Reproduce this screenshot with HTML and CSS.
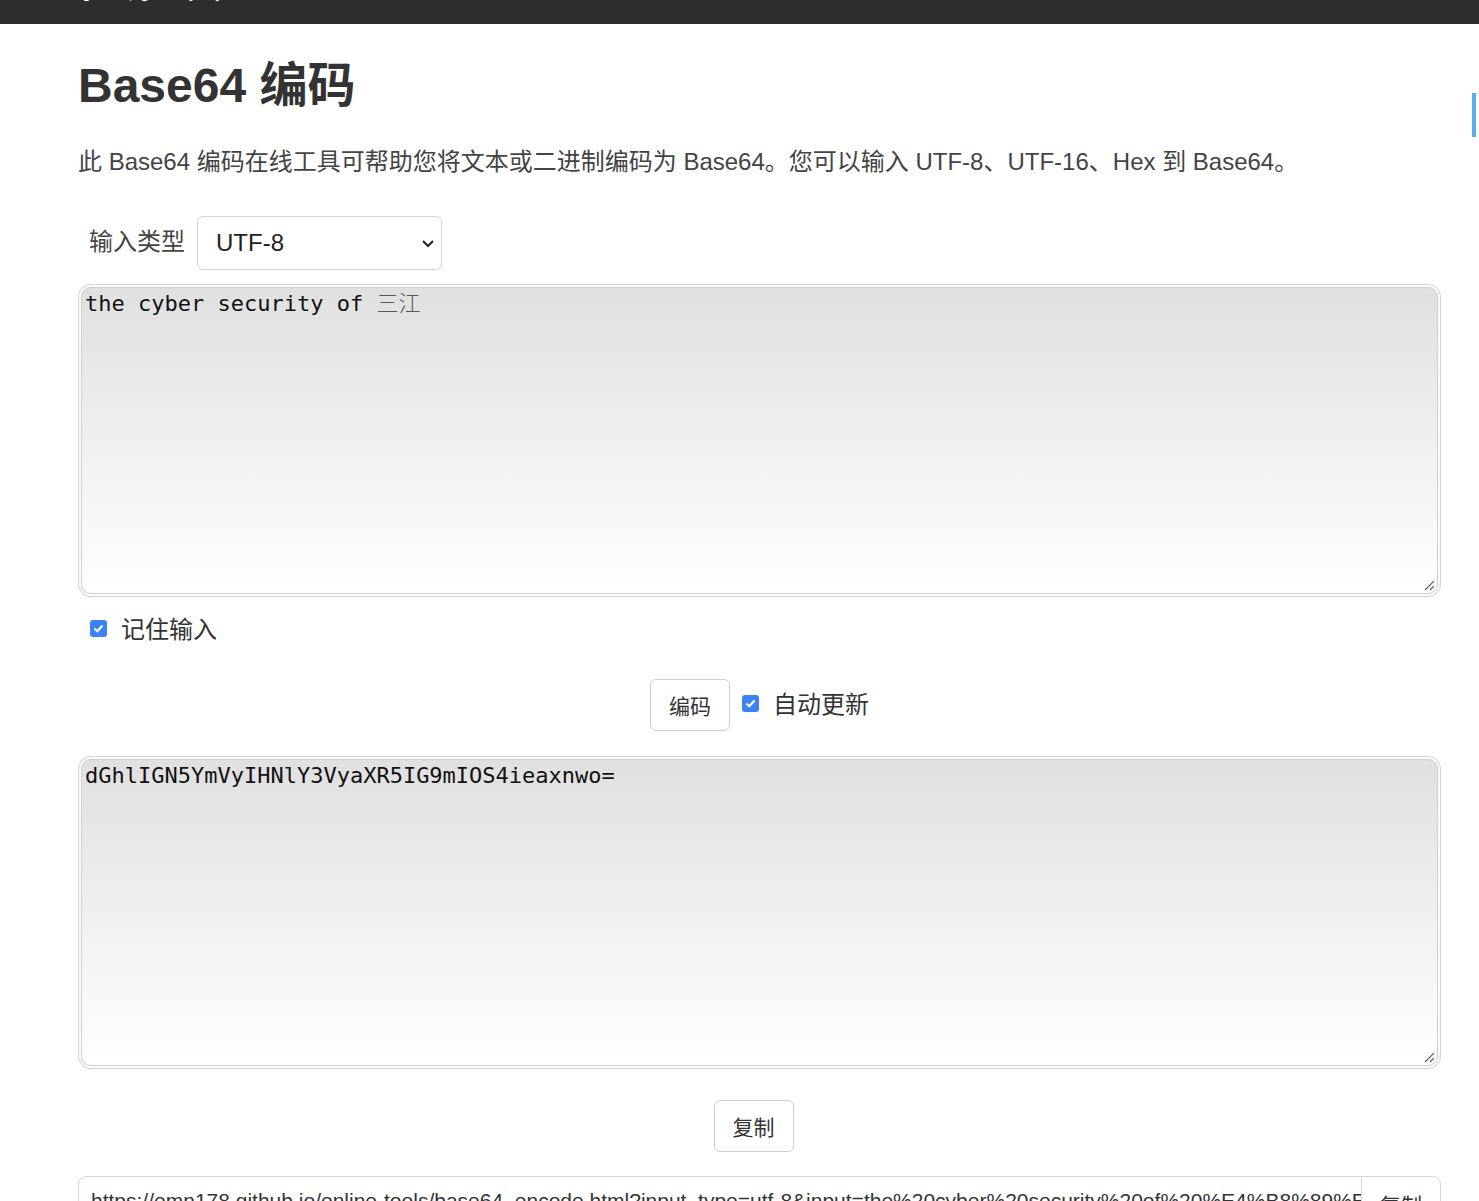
FILE: index.html
```html
<!DOCTYPE html>
<html lang="zh-CN">
<head>
<meta charset="utf-8">
<title>Base64 编码</title>
<link rel="stylesheet" href="styles.css">
</head>
<body>
<header class="topbar"><span class="brand">在线工具</span></header>
<div class="side-tab"></div>
<main class="container">
  <h1 class="title">Base64 编码</h1>
  <p class="desc">此 Base64 编码在线工具可帮助您将文本或二进制编码为 Base64。您可以输入 UTF-8、UTF-16、Hex 到 Base64。</p>
  <div class="type-row">
    <label class="type-label">输入类型</label>
    <div class="select-wrap">
      <span class="select-value">UTF-8</span>
      <svg class="chev" width="14" height="9" viewBox="0 0 14 9"><path d="M2 2 L7 7 L12 2" fill="none" stroke="#222" stroke-width="2"/></svg>
    </div>
  </div>
  <div class="area">the cyber security of <span class="cjk-serif">三江</span><svg class="grip" width="12" height="12" viewBox="0 0 12 12"><path d="M11 2 L2 11 M11 7 L7 11" stroke="#666" stroke-width="1.2"/></svg></div>
  <div class="check-row">
    <span class="cb"><svg width="11" height="9" viewBox="0 0 11 9"><path d="M1.5 4.5 L4.3 7.2 L9.5 1.5" fill="none" stroke="#fff" stroke-width="2.2"/></svg></span>
    <span class="check-label">记住输入</span>
  </div>
  <div class="action-row">
    <button class="btn">编码</button>
    <span class="cb"><svg width="11" height="9" viewBox="0 0 11 9"><path d="M1.5 4.5 L4.3 7.2 L9.5 1.5" fill="none" stroke="#fff" stroke-width="2.2"/></svg></span>
    <span class="check-label">自动更新</span>
  </div>
  <div class="area">dGhlIGN5YmVyIHNlY3VyaXR5IG9mIOS4ieaxnwo=<svg class="grip" width="12" height="12" viewBox="0 0 12 12"><path d="M11 2 L2 11 M11 7 L7 11" stroke="#666" stroke-width="1.2"/></svg></div>
  <div class="copy-row">
    <button class="btn">复制</button>
  </div>
  <div class="url-group">
    <div class="url-text">https://emn178.github.io/online-tools/base64_encode.html?input_type=utf-8&amp;input=the%20cyber%20security%20of%20%E4%B8%89%E6%B1%9F%0A</div>
    <div class="url-btn">复制</div>
  </div>
</main>
</body>
</html>
```

FILE: styles.css
```css
html, body {
  margin: 0;
  padding: 0;
  background: #fff;
}
body {
  font-family: "Liberation Sans", Arial, "Noto Sans CJK SC", sans-serif;
  color: #333;
  overflow: hidden;
}
.topbar {
  height: 24px;
  background: #2d2d2d;
  overflow: hidden;
  padding-left: 78px;
}
.brand {
  display: block;
  color: #fff;
  font-size: 36px;
  font-weight: bold;
  line-height: 36px;
  margin-top: -32px;
}
.side-tab {
  position: fixed;
  right: 3px;
  top: 93px;
  width: 4px;
  height: 44px;
  background: #5aaef0;
}
.container {
  margin-left: 78px;
  width: 1363px;
}
.title {
  margin: 33px 0 0 0;
  font-size: 48px;
  line-height: 58px;
  font-weight: bold;
  color: #333;
}
.desc {
  margin: 29px 0 0 0;
  font-size: 24px;
  line-height: 36px;
  color: #444;
}
.type-row {
  display: flex;
  align-items: center;
  margin-top: 36px;
  height: 54px;
}
.type-label {
  font-size: 24px;
  line-height: 24px;
  color: #444;
  padding-left: 11px;
  margin-right: 12px;
  margin-top: -3px;
}
.select-wrap {
  position: relative;
  box-sizing: border-box;
  width: 245px;
  height: 54px;
  border: 1px solid #d6d6d6;
  border-radius: 6px;
  display: flex;
  align-items: center;
  padding-left: 18px;
  font-size: 24px;
  color: #222;
}
.chev {
  position: absolute;
  right: 6px;
  top: 22px;
}
.area {
  position: relative;
  box-sizing: border-box;
  height: 307px;
  margin: 17px 3px 0 3px;
  border: 1px solid #cfcfcf;
  border-radius: 10px;
  box-shadow: 0 0 0 2px #fbfbfb, 0 0 0 3px #d4d4d4;
  background: linear-gradient(#e0e0e0, #ffffff);
  padding: 2px 3px;
  font-family: "DejaVu Sans Mono", monospace;
  font-size: 22px;
  line-height: 28px;
  color: #111;
}
.cjk-serif {
  font-family: "Noto Sans CJK SC", serif;
  font-weight: 300;
  line-height: 1;
  color: #555;
}
.grip {
  position: absolute;
  right: 2px;
  bottom: 2px;
}
.check-row {
  display: flex;
  align-items: center;
  margin-top: 22px;
  padding-left: 12px;
  height: 24px;
}
.cb {
  display: inline-flex;
  align-items: center;
  justify-content: center;
  width: 17px;
  height: 17px;
  border-radius: 3px;
  background: #3b82f6;
  flex: none;
}
.check-label {
  font-size: 24px;
  line-height: 24px;
  color: #333;
  margin-left: 14px;
  margin-top: 3px;
}
.action-row {
  display: flex;
  align-items: center;
  justify-content: center;
  margin-top: 39px;
}
.action-row .btn {
  margin-right: 12px;
}
.action-row .cb {
  margin-top: -4px;
}
.action-row .check-label {
  margin-top: 0;
}
.btn {
  box-sizing: border-box;
  width: 80px;
  height: 52px;
  background: #fff;
  border: 1px solid #cfcfcf;
  border-radius: 6px;
  font-family: "Liberation Sans", "Noto Sans CJK SC", sans-serif;
  font-size: 21px;
  color: #333;
  padding: 0;
}
.action-row + .area {
  margin-top: 28px;
}
.copy-row {
  display: flex;
  justify-content: center;
  margin-top: 34px;
  padding-right: 12px;
}
.url-group {
  display: flex;
  box-sizing: border-box;
  height: 52px;
  margin-top: 24px;
  border: 1px solid #d6d6d6;
  border-radius: 8px;
  overflow: hidden;
}
.url-text {
  flex: 1;
  padding: 12px 12px 0 12px;
  font-size: 21px;
  color: #333;
  white-space: nowrap;
  overflow: hidden;
}
.url-btn {
  width: 78px;
  border-left: 1px solid #d6d6d6;
  font-size: 21px;
  color: #333;
  text-align: center;
  padding-top: 12px;
}
```
